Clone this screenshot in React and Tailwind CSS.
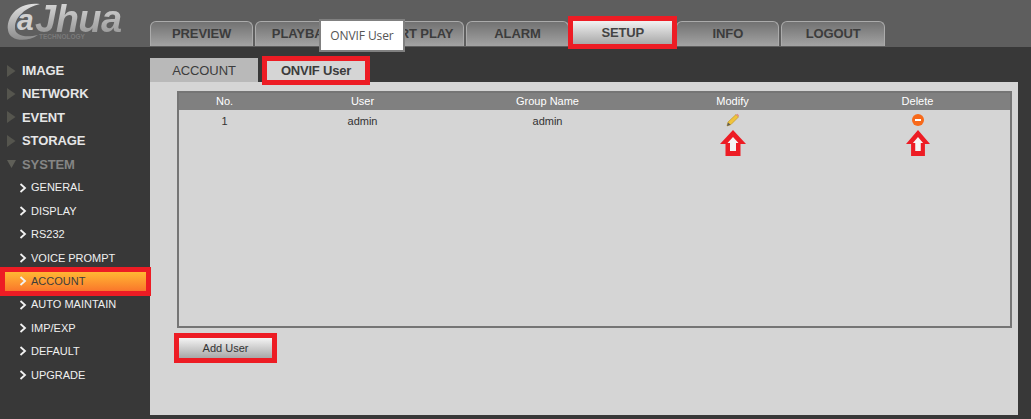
const navTabs = ['PREVIEW', 'PLAYBACK', 'SMART PLAY', 'ALARM', 'SETUP', 'INFO', 'LOGOUT'];
const menu = ['IMAGE', 'NETWORK', 'EVENT', 'STORAGE'];
const subMenu = ['GENERAL', 'DISPLAY', 'RS232', 'VOICE PROMPT', 'ACCOUNT', 'AUTO MAINTAIN', 'IMP/EXP', 'DEFAULT', 'UPGRADE'];
const columns = 'grid grid-cols-[91px_185px_185px_185px_185px]';

const Triangle = ({ down }) => (
  <svg width="9" height="12" viewBox="0 0 9 12" className="shrink-0">
    <polygon points={down ? '0,2 9,2 4.5,10' : '0,0 8.5,6 0,12'} fill={down ? '#5f5f58' : '#55554e'} />
  </svg>
);

const Chevron = () => (
  <svg width="8" height="10" viewBox="0 0 8 10" className="shrink-0">
    <path d="M1.5 1 L6 5 L1.5 9" fill="none" stroke="#f2f2f2" strokeWidth="1.8" />
  </svg>
);

const Pencil = () => (
  <svg width="14" height="14" viewBox="0 0 14 14">
    <polygon points="1,13 2,9 10,1.5 12.5,4 5,11.5" fill="#f0c33c" stroke="#b98f20" strokeWidth="0.6" />
    <polygon points="10,1.5 11.5,0.8 13,2.4 12.5,4" fill="#e08a8a" />
    <polygon points="1,13 2,9.5 4.6,11.8" fill="#5c5c5c" />
  </svg>
);

const Minus = () => (
  <div className="w-[12px] h-[12px] rounded-full bg-[#f7691a] flex items-center justify-center">
    <div className="w-[6px] h-[2px] bg-white" />
  </div>
);

const UpArrow = ({ width = 26 }) => (
  <svg width={width} height="26" viewBox="0 0 26 26" preserveAspectRatio="none">
    <polygon points="13,0 26,14 20.5,14 20.5,26 5.5,26 5.5,14 0,14" fill="#ed1c24" />
    <polygon points="13,7 18.5,13 16,13 16,21 10,21 10,13 7.5,13" fill="#f4f4f4" />
  </svg>
);

const Logo = () => (
  <div className="relative w-[150px] shrink-0 italic font-bold">
    <svg width="50" height="44" viewBox="0 0 50 44" className="absolute left-0 top-0">
      <defs>
        <linearGradient id="swoosh" x1="0" y1="0" x2="0" y2="1">
          <stop offset="0" stopColor="#e0e0e0" />
          <stop offset="1" stopColor="#8c8c8c" />
        </linearGradient>
      </defs>
      <path d="M40 4 C18 1 6 17 8 30 C9 41 26 43 38 35 C26 38 14 36 15 27 C15 17 26 7 40 4 Z" fill="url(#swoosh)" />
    </svg>
    <div className="absolute left-[17px] top-[5px] text-[30px] leading-[30px] text-[#d0d0d0]">a</div>
    <div className="absolute left-[35px] top-0 pr-[4px] text-[38px] leading-[38px] tracking-[-0.5px] whitespace-nowrap bg-clip-text text-transparent bg-gradient-to-b from-[#dcdcdc] to-[#929292]">
      Jhua
    </div>
    <div className="absolute left-[39px] top-[33px] text-[6.5px] leading-[7px] not-italic text-[#7a7a7a]">TECHNOLOGY</div>
  </div>
);

const App = () => {
  return (
    <div className="relative w-[1031px] h-[419px] overflow-hidden bg-[#383838] font-['Liberation_Sans',Arial,sans-serif]">
      {/* Header */}
      <div className="flex h-[47px] bg-[#5e5e5e]">
        <Logo />
        <div className="flex gap-[2px] pt-[21px]">
          {navTabs.map((tab) =>
            tab === 'SETUP' ? (
              <div
                key={tab}
                className="w-[99px] h-[23px] mx-[2px] pt-[1px] flex items-center justify-center text-[13px] tracking-[-0.2px] font-bold text-[#444] bg-gradient-to-b from-[#f2f2f2] to-[#a9a9a9] outline-[5px] outline-[#ed1c24] z-10"
              >
                {tab}
              </div>
            ) : (
              <div
                key={tab}
                className="w-[103.3px] h-[25px] flex items-center justify-center rounded-t-[6px] border-t border-x border-[#ababab] text-[13px] tracking-[-0.1px] font-bold text-[#3c3c3c] bg-gradient-to-b from-[#727272] to-[#a3a3a3]"
              >
                {tab}
              </div>
            )
          )}
        </div>
      </div>

      {/* Tooltip */}
      <div className="absolute left-[319px] top-[19px] w-[86px] h-[33px] z-20 flex items-center justify-center bg-white border-2 border-[#808080] text-[12px] tracking-[-0.1px] text-[#555] font-['Open_Sans',sans-serif]">
        ONVIF User
      </div>

      <div className="flex">
        {/* Sidebar */}
        <div className="w-[150px] shrink-0 pt-[12px]">
          {menu.map((item) => (
            <div key={item} className="h-[23.4px] flex items-center gap-[6px] pl-[7px] text-[13px] tracking-[-0.1px] font-bold text-[#e6e6e6]">
              <Triangle />
              {item}
            </div>
          ))}
          <div className="h-[23.4px] flex items-center gap-[6px] pl-[7px] text-[13px] tracking-[-0.1px] font-bold text-[#858585]">
            <Triangle down />
            SYSTEM
          </div>
          {subMenu.map((item) =>
            item === 'ACCOUNT' ? (
              <div
                key={item}
                className="relative h-[19px] my-[2.2px] ml-[5px] mr-[4px] flex items-center gap-[4px] pl-[14px] text-[11px] text-[#3d3d3d] bg-gradient-to-b from-[#ffb733] to-[#f9762b] outline-[5px] outline-[#ed1c24]"
              >
                <Chevron />
                {item}
              </div>
            ) : (
              <div key={item} className="h-[23.4px] flex items-center gap-[4px] pl-[19px] text-[11px] text-[#f0f0f0]">
                <Chevron />
                {item}
              </div>
            )
          )}
        </div>

        {/* Content */}
        <div className="w-[868px] pt-[11px]">
          <div className="flex h-[24px]">
            <div className="w-[108px] pt-[1px] flex items-center justify-center bg-[#b9b9b9] text-[13px] tracking-[-0.1px] text-[#3c3c3c]">ACCOUNT</div>
            <div className="ml-[9px] w-[98px] mt-[3px] h-[19px] flex items-center justify-center bg-[#d5d5d5] text-[13px] tracking-[-0.2px] font-bold text-[#3c3c3c] outline-[5px] outline-[#ed1c24]">
              ONVIF User
            </div>
          </div>
          <div className="h-[333px] bg-[#d5d5d5] pt-[9px] pl-[27px]">
            <div className="w-[835px] h-[237px] border-2 border-[#757575]">
              <div className={`${columns} h-[17px] items-center bg-[#808080] text-[11px] text-white text-center`}>
                <div>No.</div>
                <div>User</div>
                <div>Group Name</div>
                <div>Modify</div>
                <div>Delete</div>
              </div>
              <div className={`${columns} pt-[3px] text-[11px] text-[#333] text-center`}>
                <div>1</div>
                <div>admin</div>
                <div>admin</div>
                <div className="flex flex-col items-center">
                  <Pencil />
                  <div className="mt-[3px]"><UpArrow /></div>
                </div>
                <div className="flex flex-col items-center">
                  <div className="h-[14px] flex items-center"><Minus /></div>
                  <div className="mt-[3px]"><UpArrow width={24} /></div>
                </div>
              </div>
            </div>
            <div className="ml-[2px] mt-[10px] w-[93px] h-[20px] flex items-center justify-center bg-gradient-to-b from-[#f4f4f4] to-[#a8a8a8] text-[11px] text-[#333] outline-[5px] outline-[#ed1c24]">
              Add User
            </div>
          </div>
        </div>
      </div>
    </div>
  );
};

export default App;
